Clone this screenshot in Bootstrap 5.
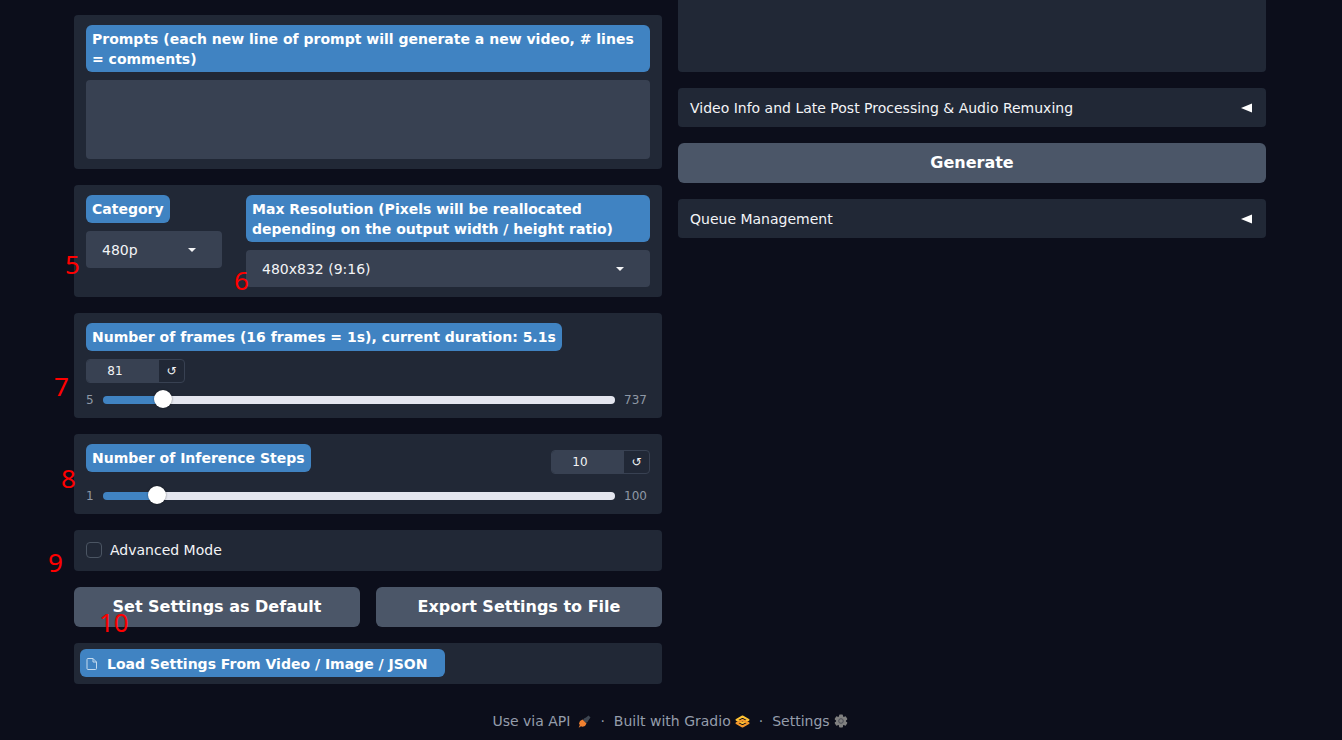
<!DOCTYPE html>
<html lang="en">
<head>
<meta charset="utf-8">
<meta name="viewport" content="width=device-width, initial-scale=1">
<title>Video Generator</title>
<link href="https://cdn.jsdelivr.net/npm/bootstrap@5.3.0/dist/css/bootstrap.min.css" rel="stylesheet">
<style>
  body { background: #0c0e1b; color: #f3f4f6; font: 14px/20px "DejaVu Sans", Verdana, sans-serif; }
  .page { padding: 0 76px 0 74px; }
  .settings { padding-top: 15px; }
  .pane { background: #212836; border-radius: 4px; }
  .pane-body { padding: 10px 12px; }
  .tag { background: #4083c2; color: #fff; font-weight: 700; border-radius: 6px; padding: 4px 6px 3px; min-height: 28px; display: inline-block; }
  .field { background: #384152; border: 0; border-radius: 4px; color: #f3f4f6; display: block; width: 100%; }
  .prompt-box { height: 79px; resize: none; padding: 8px; }
  .pick { appearance: none; height: 37px; padding: 0 40px 0 16px; }
  .pick-wrap::after { content: ""; position: absolute; right: 26px; top: 17px; border: 4px solid transparent; border-top-color: #f3f4f6; border-bottom: 0; pointer-events: none; }
  .col-category { flex: 0 0 136px; }
  .stepper { border: 1px solid #384152; border-radius: 4px; overflow: hidden; height: 24px; width: 99px; }
  .stepper input { background: #384152; border: 0; color: #f3f4f6; font-size: 12px; width: 72px; padding: 0 16px 0 0; text-align: center; appearance: textfield; }
  .stepper input::-webkit-inner-spin-button { appearance: none; }
  .stepper button { background: none; border: 0; color: #f3f4f6; padding: 0; font-size: 12px; line-height: 12px; }
  .bounds { color: #8f98a5; font-size: 12px; line-height: 18px; }
  .slide-row { gap: 9px; height: 21px; }
  .bound-low { width: 8px; }
  .bound-high { width: 26px; }
  .slider { appearance: none; background: none; height: 20px; min-width: 0; margin: 0; }
  .slider::-webkit-slider-runnable-track { height: 8px; border-radius: 4px; background: linear-gradient(to right, #4083c2 var(--fill), #e4e6ef var(--fill)); }
  .slider::-webkit-slider-thumb { appearance: none; width: 18px; height: 18px; margin-top: -6px; border-radius: 50%; background: #fff; box-shadow: 0 0 2px rgba(0,0,0,.5); }
  .steps-head { height: 30px; }
  .steps-head .stepper { margin-top: 6px; }
  .steps-slide { padding-top: 13px; height: 30px; }
  .check-pane { min-height: 41px; }
  .check { appearance: none; width: 16px; height: 16px; margin: 0; border: 1px solid #4b5563; border-radius: 4px; background: #212836; }
  .action { background: #4b5668; color: #fff; font-size: 16px; font-weight: 700; line-height: 24px; height: 40px; border: 0; border-radius: 6px; }
  .action:hover { background: #5b6575; color: #fff; }
  .preview { height: 72px; border-radius: 0 0 4px 4px; }
  .fold { border: 0; color: #f3f4f6; padding: 0 14px 0 12px; height: 39px; }
  .load-pane { padding: 6px; height: 41px; }
  .load-btn { min-width: 365px; gap: 9px; }
  .foot { padding-top: 27px; gap: 9px; }
  .foot, .foot a { color: #959dab; text-decoration: none; }
  .note { position: absolute; color: #f00; font: 26px/26px "Noto Sans", sans-serif; pointer-events: none; z-index: 2; }
</style>
</head>
<body>
<div class="page">
  <main class="d-flex gap-3 align-items-start">
    <div class="settings d-flex flex-column gap-3 flex-fill w-50">
      <section class="pane pane-body">
        <label class="tag w-100 mb-2" for="prompts">Prompts (each new line of prompt will generate a new video, # lines = comments)</label>
        <textarea id="prompts" class="field prompt-box"></textarea>
      </section>

      <section class="pane pane-body d-flex gap-4 position-relative">
        <div class="col-category">
          <label class="tag mb-2" for="category">Category</label>
          <div class="pick-wrap position-relative"><select id="category" class="field pick"><option>480p</option></select></div>
        </div>
        <div class="flex-fill">
          <label class="tag w-100 mb-2" for="resolution">Max Resolution (Pixels will be reallocated depending on the output width / height ratio)</label>
          <div class="pick-wrap position-relative"><select id="resolution" class="field pick"><option>480x832 (9:16)</option></select></div>
        </div>
        <span class="note" style="left:-9px;top:66px">5</span>
        <span class="note" style="left:160px;top:82px">6</span>
      </section>

      <section class="pane pane-body position-relative">
        <label class="tag mb-2" for="frames">Number of frames (16 frames = 1s), current duration: 5.1s</label>
        <div class="stepper d-flex">
          <input id="frames" type="number" value="81">
          <button class="flex-fill" type="button" aria-label="Reset frames">↺</button>
        </div>
        <div class="slide-row bounds d-flex align-items-center mt-1 pt-1">
          <span class="bound-low">5</span>
          <input class="slider flex-fill" type="range" min="5" max="737" value="81" aria-label="Frames" style="--fill:12%">
          <span class="bound-high">737</span>
        </div>
        <span class="note" style="left:-20px;top:60px">7</span>
      </section>

      <section class="pane pane-body position-relative">
        <div class="steps-head d-flex justify-content-between align-items-start">
          <label class="tag" for="steps">Number of Inference Steps</label>
          <div class="stepper d-flex">
            <input id="steps" type="number" value="10">
            <button class="flex-fill" type="button" aria-label="Reset steps">↺</button>
          </div>
        </div>
        <div class="slide-row steps-slide bounds d-flex align-items-center">
          <span class="bound-low">1</span>
          <input class="slider flex-fill" type="range" min="1" max="100" value="10" aria-label="Inference steps" style="--fill:11%">
          <span class="bound-high">100</span>
        </div>
        <span class="note" style="left:-13px;top:31px">8</span>
      </section>

      <section class="pane pane-body check-pane position-relative">
        <div class="d-flex align-items-center gap-2">
          <input id="advanced" class="check" type="checkbox">
          <label for="advanced">Advanced Mode</label>
        </div>
        <span class="note" style="left:-26px;top:19px">9</span>
      </section>

      <div class="d-flex gap-3 position-relative">
        <button class="btn action w-50" type="button">Set Settings as Default</button>
        <button class="btn action w-50" type="button">Export Settings to File</button>
        <span class="note" style="left:25px;top:22px">10</span>
      </div>

      <section class="pane load-pane">
        <button class="tag load-btn border-0 d-inline-flex align-items-center" type="button">
          <svg width="12" height="14" viewBox="0 0 12 14" fill="none" stroke="#c3daef" stroke-linejoin="round"><path d="M2 1.500h5l3.500 3.500v6.500a1 1 0 0 1-1 1H2a1 1 0 0 1-1-1v-9a1 1 0 0 1 1-1zM7 1.500V5h3.500"/></svg>
          <span>Load Settings From Video / Image / JSON</span>
        </button>
      </section>
    </div>

    <div class="d-flex flex-column gap-3 flex-fill w-50">
      <div class="pane preview"></div>
      <button class="pane fold d-flex align-items-center justify-content-between" type="button">
        <span>Video Info and Late Post Processing &amp; Audio Remuxing</span>
        <svg width="11" height="10" viewBox="0 0 11 10" fill="#fff"><path d="M0 5 11 .5v9z"/></svg>
      </button>
      <button class="btn action" type="button">Generate</button>
      <button class="pane fold d-flex align-items-center justify-content-between" type="button">
        <span>Queue Management</span>
        <svg width="11" height="10" viewBox="0 0 11 10" fill="#fff"><path d="M0 5 11 .5v9z"/></svg>
      </button>
    </div>
  </main>

  <footer class="foot d-flex justify-content-center align-items-center">
    <a href="#" class="d-flex align-items-center gap-2">Use via API
      <svg width="13" height="13" viewBox="0 0 13 13"><path d="M6 3.500 8 2.500 10.500.5l2 2L11 4.500 9.500 7 8 8 5 5z" fill="#3e4652"/><path d="M2 6 4.500 4.500 8.500 8.500 7 11l-2.500.8L3 11.200.7 12.700 1.800 10 1 8.500z" fill="#f08030"/></svg>
    </a>
    <span>·</span>
    <a href="#" class="d-flex align-items-center gap-1">Built with Gradio
      <svg width="15" height="13" viewBox="0 0 15 13" fill="none" stroke-width="2" stroke-linejoin="round"><path d="M1.500 4.800 7.500 1.500l6 3.300-6 3.200z" stroke="#ffc233"/><path d="M1.500 8.200 7.500 5l6 3.200-6 3.300z" stroke="#f5982b"/></svg>
    </a>
    <span>·</span>
    <a href="#" class="d-flex align-items-center gap-1">Settings
      <svg width="14" height="14" viewBox="-7 -7 14 14"><g fill="#808080"><circle r="5"/><rect x="-2" y="-6.500" width="4" height="13" rx="1"/><rect x="-2" y="-6.500" width="4" height="13" rx="1" transform="rotate(60)"/><rect x="-2" y="-6.500" width="4" height="13" rx="1" transform="rotate(120)"/></g><circle r="2.300" fill="none" stroke="#4a4c55"/></svg>
    </a>
  </footer>
</div>
<script src="https://cdn.jsdelivr.net/npm/bootstrap@5.3.0/dist/js/bootstrap.bundle.min.js"></script>
</body>
</html>
